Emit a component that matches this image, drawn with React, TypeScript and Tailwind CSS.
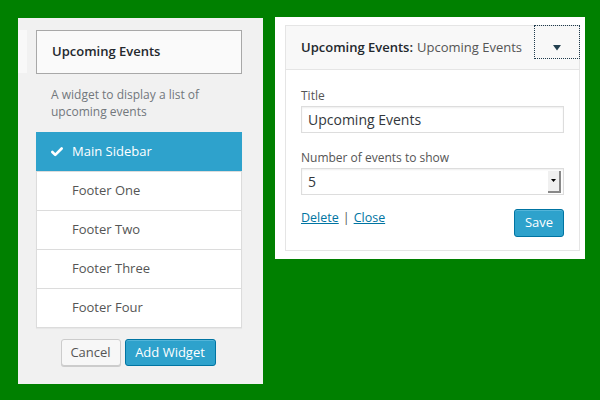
import React from "react";
import { Check } from "lucide-react";

const font = { fontFamily: '"Open Sans", "Noto Sans", sans-serif' };

const areas = ["Main Sidebar", "Footer One", "Footer Two", "Footer Three", "Footer Four"];

const ChooserPanel = () => (
  <div className="mt-[1px] w-[245px] h-[366px] bg-[#f1f1f1] flex flex-col pt-[12px]">
    {/* title row, with the edge of the previous widget peeking in */}
    <div className="flex items-start">
      <div className="w-[9px] h-[43px] bg-[#f8f8f8]" />
      <div className="ml-[9px] w-[206px] h-[44px] bg-[#fafafa] border border-[#a8a8a8] flex items-center pl-[15px]">
        <span className="text-[13px] font-semibold text-[#23282d]">Upcoming Events</span>
      </div>
    </div>

    <p className="ml-[33px] mt-[12px] w-[180px] text-[12px] leading-[17px] text-[#72777c]">
      A widget to display a list of upcoming events
    </p>

    <ul className="ml-[18px] mt-[12px] w-[206px] bg-white border border-[#dcdcdc] shadow-[0_1px_1px_rgba(0,0,0,0.04)]">
      {areas.map((name, i) => (
        <li
          key={name}
          className={`h-[39px] flex items-center pl-[35px] text-[13px] ${
            i === 0
              ? "bg-[#2ea2cc] text-white -mt-[1px] -mx-[1px] pl-[36px] relative"
              : "border-t border-[#dcdcdc] text-[#555]"
          }`}
        >
          {i === 0 && (
            <Check className="absolute left-[14px] w-[14px] h-[14px]" strokeWidth={4.5} color="#fff" />
          )}
          {name}
        </li>
      ))}
    </ul>

    <div className="mt-[11px] flex justify-center gap-[4px] pr-[5px]">
      <button className="h-[27px] w-[60px] rounded-[3px] border border-[#ccc] bg-[#f7f7f7] text-[13px] text-[#555] shadow-[0_1px_0_#ccc]">
        Cancel
      </button>
      <button className="h-[27px] w-[91px] rounded-[3px] border border-[#0074a2] bg-[#2ea2cc] text-[13px] text-white shadow-[inset_0_1px_0_rgba(120,200,230,0.5)]">
        Add Widget
      </button>
    </div>
  </div>
);

const WidgetPanel = () => (
  <div className="ml-[12px] w-[310px] h-[242px] bg-white pt-[8px] pl-[10px]">
    <div className="w-[295px] h-[226px] border border-[#e5e5e5] flex flex-col">
      <div className="h-[44px] bg-[#f8f8f8] border-b border-[#e5e5e5] flex items-start">
        <div className="flex-1 h-full flex items-center pl-[15px] text-[13px] whitespace-nowrap">
          <span className="font-semibold text-[#23282d]">Upcoming Events:</span>
          <span className="ml-[4px] text-[#555]">Upcoming Events</span>
        </div>
        <div className="-mt-[1px] -mr-[1px] w-[46px] h-[34px] border border-dotted border-[#1e3a4c] flex justify-center pt-[19px]">
          <svg width="8" height="6" viewBox="0 0 8 6">
            <path d="M0 0 H8 L4 5.5 Z" fill="#23404f" />
          </svg>
        </div>
      </div>

      <div className="flex-1 flex flex-col px-[15px] pt-[17px] text-[12px] text-[#555]">
        <label className="leading-[18px]">Title</label>
        <div className="mt-[1px] h-[27px] border border-[#ddd] shadow-[inset_0_1px_2px_rgba(0,0,0,0.07)] flex items-center pl-[6px] text-[14px] text-[#32373c]">
          Upcoming Events
        </div>

        <label className="mt-[16px] leading-[18px]">Number of events to show</label>
        <div className="mt-[1px] h-[27px] border border-[#ddd] shadow-[inset_0_1px_2px_rgba(0,0,0,0.07)] flex items-center pl-[6px] pr-[2px] text-[14px] text-[#32373c]">
          <span className="flex-1">5</span>
          <div className="w-[13px] h-[22px] bg-[#f0f0f0] border-r-2 border-b-2 border-[#888] flex items-center justify-center">
            <svg width="5" height="3" viewBox="0 0 5 3">
              <path d="M0 0 H5 L2.5 3 Z" fill="#000" />
            </svg>
          </div>
        </div>

        <div className="mt-[14px] flex items-start justify-between">
          <div className="leading-[18px] text-[12.5px] text-[#555]">
            <a className="text-[#0074a2] underline">Delete</a>
            <span className="mx-[4px]">|</span>
            <a className="text-[#0074a2] underline">Close</a>
          </div>
          <button className="h-[28px] w-[50px] rounded-[3px] border border-[#0074a2] bg-[#2ea2cc] text-[13px] text-white shadow-[inset_0_1px_0_rgba(120,200,230,0.5)]">
            Save
          </button>
        </div>
      </div>
    </div>
  </div>
);

export default function App() {
  return (
    <div className="w-[600px] h-[400px] bg-[#008000] flex items-start pl-[18px] pt-[17px]" style={font}>
      <ChooserPanel />
      <WidgetPanel />
    </div>
  );
}
